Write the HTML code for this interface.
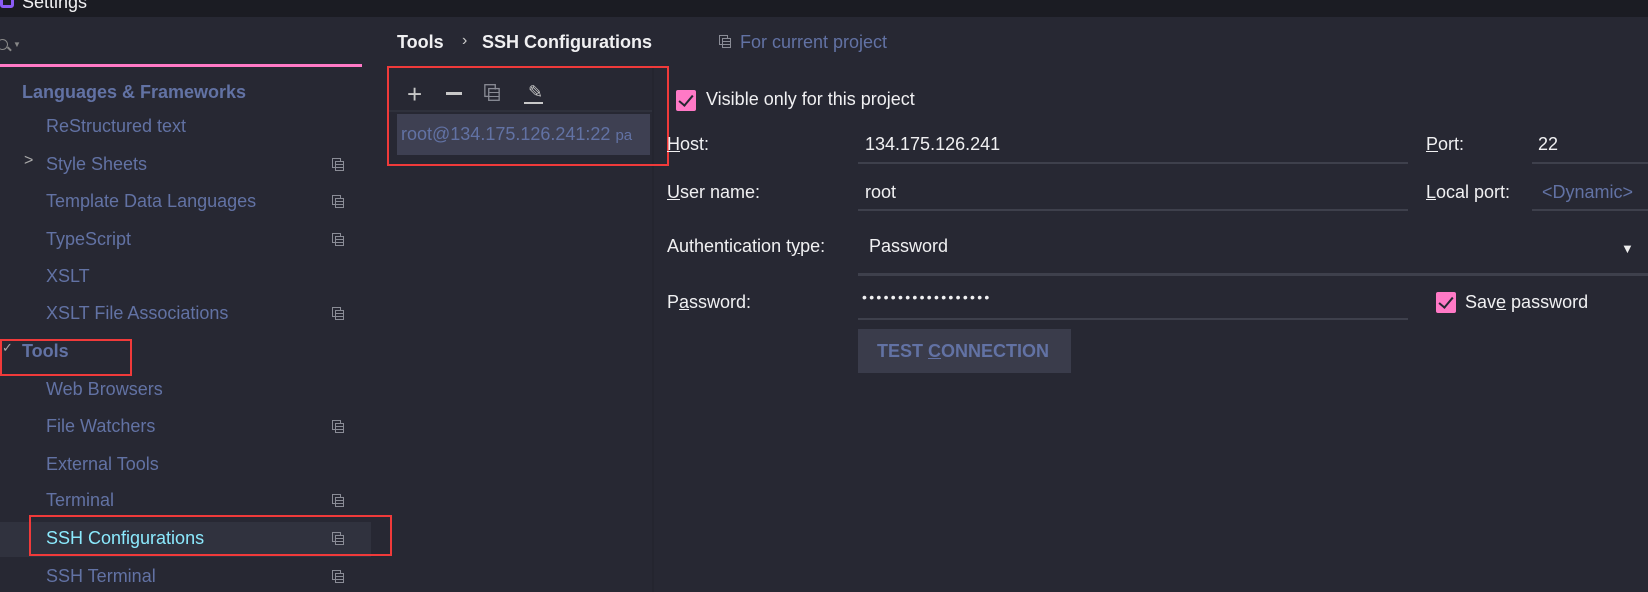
<html><head><style>
body{margin:0;width:1648px;height:592px;overflow:hidden;background:#272833;font-family:"Liberation Sans",sans-serif;position:relative}
.a{position:absolute;white-space:nowrap}
.s{color:#6272a4;font-size:18px}
.w{color:#f0f0f2;font-size:18px}
.ic{position:absolute;width:12px;height:13px}
.ic:before{content:"";position:absolute;left:0;top:0;width:7px;height:8px;border:1.5px solid #8a8c96}
.ic:after{content:"";position:absolute;left:3px;top:3px;width:7px;height:8px;border:1.5px solid #8a8c96;background:#272833 repeating-linear-gradient(#272833 0 2px,#8a8c96 2px 3px);background-clip:content-box;padding:0}
.ul{position:absolute;height:2px;background:#3e404c}
.rb{position:absolute;border:2px solid #f03a3a}
.cb{position:absolute;width:20px;height:21px;background:#ff79c6;border-radius:2px}
.cb:after{content:"";position:absolute;left:6px;top:2px;width:6px;height:12px;border:solid #262732;border-width:0 2px 2px 0;transform:rotate(40deg)}
</style></head><body>
<div class="a" style="left:0;top:0;width:1648px;height:17px;background:#1b1c23"></div>
<div class="a" style="left:0;top:-6px;width:14px;height:14px;border:3px solid #8b5cf6;border-radius:3px;box-sizing:border-box"></div>
<div class="a w" style="left:22px;top:-8px;font-size:18px">Settings</div>
<div class="a" style="left:-3px;top:39px;width:9px;height:9px;border:1.5px solid #888;border-radius:50%"></div>
<div class="a" style="left:7px;top:48px;width:5px;height:1.5px;background:#888;transform:rotate(45deg)"></div>
<div class="a" style="left:13px;top:40px;color:#888;font-size:8px">▼</div>
<div class="a" style="left:0;top:64px;width:362px;height:3px;background:#ff79c6"></div>
<div class="a s" style="left:22px;top:82px;font-weight:bold">Languages &amp; Frameworks</div>
<div class="a s" style="left:46px;top:116px">ReStructured text</div>
<div class="a" style="left:24px;top:152px;color:#aaa;font-size:16px">&gt;</div>
<div class="a s" style="left:46px;top:154px">Style Sheets</div>
<div class="a s" style="left:46px;top:191px">Template Data Languages</div>
<div class="a s" style="left:46px;top:229px">TypeScript</div>
<div class="a s" style="left:46px;top:266px">XSLT</div>
<div class="a s" style="left:46px;top:303px">XSLT File Associations</div>
<div class="a" style="left:2px;top:340px;color:#aaa;font-size:13px">✓</div>
<div class="a s" style="left:22px;top:341px;font-weight:bold">Tools</div>
<div class="a s" style="left:46px;top:379px">Web Browsers</div>
<div class="a s" style="left:46px;top:416px">File Watchers</div>
<div class="a s" style="left:46px;top:454px">External Tools</div>
<div class="a s" style="left:46px;top:490px">Terminal</div>
<div class="a" style="left:0;top:522px;width:371px;height:35px;background:#30323e"></div>
<div class="a s" style="left:46px;top:528px;color:#8be9fd">SSH Configurations</div>
<div class="a s" style="left:46px;top:566px">SSH Terminal</div>
<div class="ic" style="left:332px;top:158px"></div><div class="ic" style="left:332px;top:195px"></div><div class="ic" style="left:332px;top:233px"></div><div class="ic" style="left:332px;top:307px"></div><div class="ic" style="left:332px;top:420px"></div><div class="ic" style="left:332px;top:494px"></div><div class="ic" style="left:332px;top:532px"></div><div class="ic" style="left:332px;top:570px"></div>
<div class="rb" style="left:0;top:339px;width:128px;height:33px"></div>
<div class="rb" style="left:29px;top:515px;width:359px;height:37px"></div>
<div class="a w" style="left:397px;top:32px;font-weight:bold">Tools</div>
<div class="a" style="left:462px;top:32px;color:#ccc;font-size:16px">›</div>
<div class="a w" style="left:482px;top:32px;font-weight:bold">SSH Configurations</div>
<div class="ic" style="left:719px;top:35px"></div>
<div class="a s" style="left:740px;top:32px">For current project</div>
<div class="a" style="left:652px;top:66px;width:2px;height:526px;background:#24252f"></div>
<div class="a" style="left:389px;top:110px;width:263px;height:2px;background:#2f313c"></div>
<div class="a" style="left:407px;top:84px;color:#c8c8c8;font-size:26px;line-height:20px">+</div>
<div class="a" style="left:446px;top:92px;width:16px;height:3px;background:#c8c8c8"></div>
<div class="ic" style="left:486px;top:86px;transform:scale(1.3)"></div>
<div class="a" style="left:528px;top:82px;color:#c8c8c8;font-size:18px">✎</div>
<div class="a" style="left:524px;top:102px;width:19px;height:2px;background:#c8c8c8"></div>
<div class="a" style="left:397px;top:114px;width:253px;height:41px;background:#3e4052"></div>
<div class="a s" style="left:401px;top:124px;font-size:18px">root@134.175.126.241:22 <span style="font-size:15px">pa</span></div>
<div class="rb" style="left:387px;top:66px;width:278px;height:96px"></div>
<div class="cb" style="left:676px;top:90px"></div>
<div class="a w" style="left:706px;top:89px">Visible only for this project</div>
<div class="a w" style="left:667px;top:134px"><u>H</u>ost:</div>
<div class="a w" style="left:865px;top:134px">134.175.126.241</div>
<div class="ul" style="left:858px;top:162px;width:550px"></div>
<div class="a w" style="left:1426px;top:134px"><u>P</u>ort:</div>
<div class="a w" style="left:1538px;top:134px">22</div>
<div class="ul" style="left:1532px;top:162px;width:116px"></div>
<div class="a w" style="left:667px;top:182px"><u>U</u>ser name:</div>
<div class="a w" style="left:865px;top:182px">root</div>
<div class="ul" style="left:858px;top:209px;width:550px"></div>
<div class="a w" style="left:1426px;top:182px"><u>L</u>ocal port:</div>
<div class="a s" style="left:1542px;top:182px">&lt;Dynamic&gt;</div>
<div class="ul" style="left:1532px;top:209px;width:116px"></div>
<div class="a w" style="left:667px;top:236px">Authentication t<u>y</u>pe:</div>
<div class="a w" style="left:869px;top:236px">Password</div>
<div class="a" style="left:1621px;top:241px;color:#eee;font-size:13px">▼</div>
<div class="ul" style="left:858px;top:273px;width:790px;height:3px"></div>
<div class="a w" style="left:667px;top:292px">P<u>a</u>ssword:</div>
<div class="a w" style="left:862px;top:289px;font-size:14px;letter-spacing:2.3px">••••••••••••••••••</div>
<div class="ul" style="left:858px;top:318px;width:550px"></div>
<div class="cb" style="left:1436px;top:292px"></div>
<div class="a w" style="left:1465px;top:292px">Sav<u>e</u> password</div>
<div class="a" style="left:858px;top:329px;width:213px;height:44px;background:#3a3c4b"></div>
<div class="a s" style="left:877px;top:341px;font-weight:bold">TEST <u>C</u>ONNECTION</div>
</body></html>
